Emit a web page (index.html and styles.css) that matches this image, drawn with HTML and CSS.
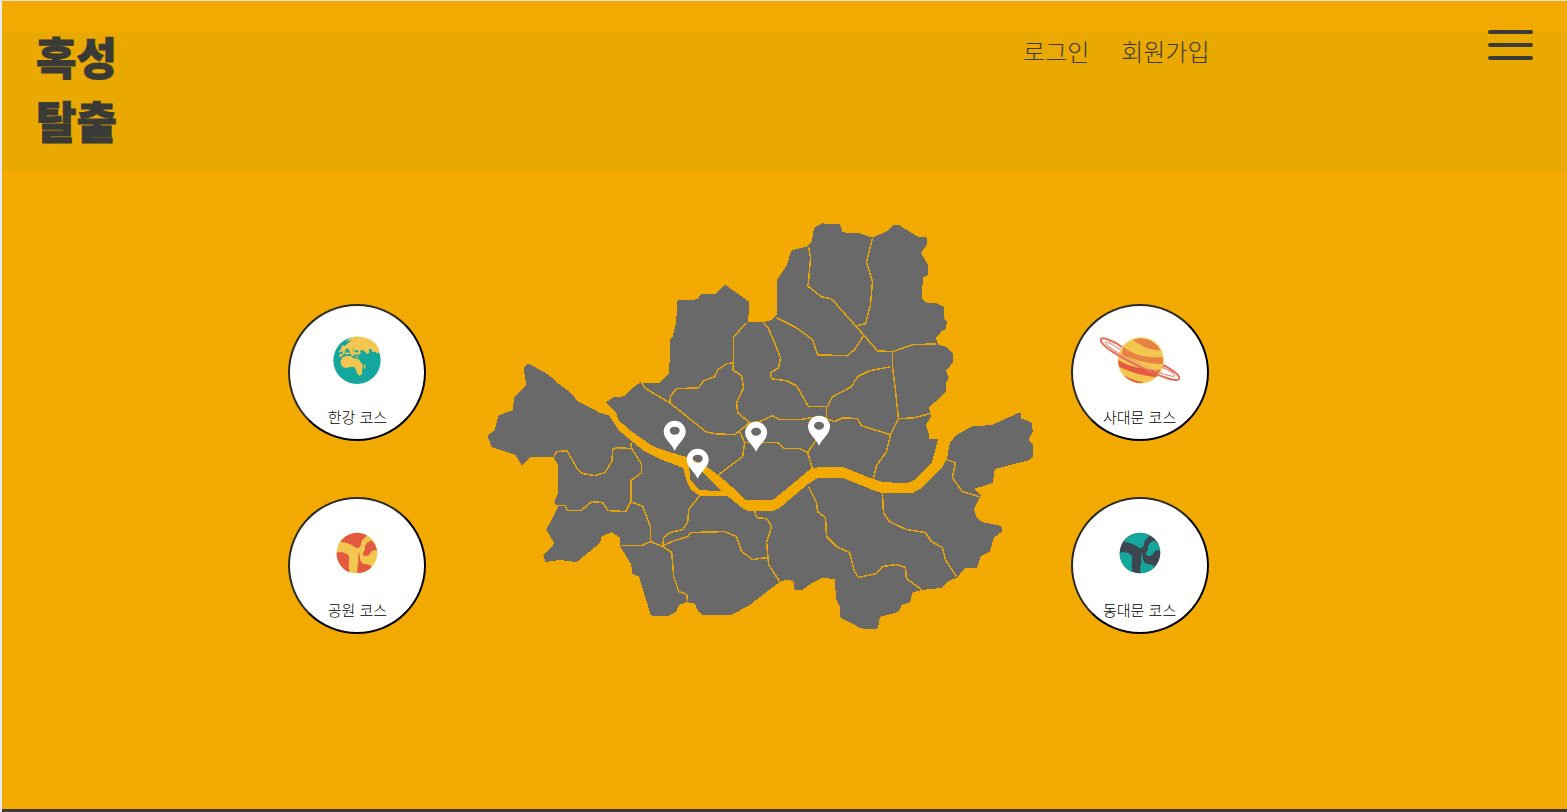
FILE: index.html
```html
<!DOCTYPE html>
<html lang="ko">
<head>
<meta charset="utf-8">
<meta name="viewport" content="width=device-width, initial-scale=1">
<title>혹성탈출</title>
<link rel="stylesheet" href="styles.css">
</head>
<body>
<header class="header">
  <h1 class="logo"><a class="logo-link" href="#"><span>혹성</span><span>탈출</span></a></h1>
  <nav class="nav">
    <a class="nav-link" href="#">로그인</a>
    <a class="nav-link" href="#">회원가입</a>
  </nav>
  <button class="menu" type="button" aria-label="메뉴"><span class="bar"></span><span class="bar"></span><span class="bar"></span></button>
</header>
<main class="main">
  <div class="courses">
    <button class="course" type="button">
      <svg class="planet" viewBox="112 111 240 168" aria-hidden="true">
        <circle cx="232" cy="196" r="71" fill="#14a79d"/>
        <path fill="#f3c74f" d="M218 127C245 122 270 130 288 146L297 160L299 170L292 176L288 170L280 171L273 161L266 165L271 171L262 177L256 170L247 164L241 169L244 175L236 179L240 187L232 188L222 182L213 183L216 178L208 176L200 179L195 175L190 180L184 187L178 184L180 178L189 176L190 169L184 171L179 173L178 168L183 165L186 154L190 150L194 154L203 146L212 139L217 134L208 137L200 140L207 132Z"/>
        <path fill="#f3c74f" d="M189 187L202 182L214 184L221 190L233 191L240 196L245 205L250 208L248 220L247 238L239 242L232 234L228 222L223 215L211 216L200 219L188 215L183 206L183 197ZM253 209L258 211L256 221L252 220Z"/>
        <path fill="#14a79d" d="M194 169L201 160L207 163L209 169L214 171L209 174L202 171ZM222 169L230 165L238 169L232 173ZM222 178L236 181L243 188L236 186L224 182ZM246 168L250 169L249 177L245 173Z"/>
        <path fill="none" stroke="#14a79d" stroke-width="2" d="M230 177L241 189L243 195M195 174L207 169M217 166L225 160"/>
      </svg>
      <span class="course-name">한강 코스</span>
    </button>
    <button class="course" type="button">
      <svg class="planet" viewBox="112 105 240 168" aria-hidden="true">
        <circle cx="232" cy="189" r="61" fill="#f3c74f"/>
        <path fill="#e35a41" d="M182 156A61 61 0 0 1 262 136C257 143 246 149 245 158C244 168 239 174 233 175C222 170 211 157 182 156ZM277 152A61 61 0 0 1 293 182C279 178 275 184 271 192C264 201 251 199 249 192C249 186 256 183 256 176C255 160 266 153 277 152ZM171 188C186 184 206 189 208 200C210 208 207 220 207 228C207 236 211 242 209 247A61 61 0 0 1 171 188ZM238 187C241 198 240 213 247 219C253 225 267 219 276 231A61 61 0 0 1 234 250C230 235 237 223 236 211C235 201 236 194 238 187Z"/>
      </svg>
      <span class="course-name">공원 코스</span>
    </button>
  </div>
  <svg class="map" viewBox="426 171 645 596" role="img" aria-label="서울 지도">
    <path class="land" d="M528 364L524 368L527 386L515 397L513 411L499 416L495 431L488 436L492 447L516 455L522 465L531 457L554 457L559 466L559 492L555 503L559 507L547 530L555 544L544 556L546 562L560 560L577 562L600 543L601 537L612 532L621 538L621 547L632 565L633 574L640 577L652 616L668 616L676 612L679 605L687 602L696 604L698 611L703 615L732 615L750 605L780 582L786 580L792 580L795 583V590H803L812 583L822 578L836 579L837 600L841 608V618L858 627L865 629H878L880 617L899 612L902 605L911 602L912 593L922 590L942 588L949 581L957 578L966 568H977L981 556L990 552L994 538L1002 532V527L983 523L977 518L974 510L981 496L974 489L993 483L995 469L1030 460L1033 457V445L1029 440L1033 432L1032 423L1021 419V413L992 426L973 427L957 436L950 444L947 459L939 440H929V434L926 425L931 417L929 408L946 392V383L949 378L946 371L953 363V354L948 348L938 345L936 338L942 331L946 329L947 322L944 318V307L937 304L926 303L922 298L923 277L928 275V265L921 253L927 245V238L918 237L900 226H894L887 232L873 238L860 234L843 233L840 225L823 224L816 227L814 232L813 242L808 247L792 251L788 265L778 280V315L771 321L764 323H748L749 302L725 285L715 295H701L698 300L678 301L677 323L673 338L671 339L670 373L660 384H643L641 383L635 387L625 397L614 398L606 403L598 412L578 402L570 393L557 383L548 375Z"/>
    <path class="water" d="M601 400L606 403L616 413L618 420L630 431L653 447L667 452L687 458L708 468L720 477L737 492L746 501H773L783 493L812 469L820 468H843L863 476L883 483L907 484L915 481L933 463L939 440L950 438V444L947 459L942 468L922 488L913 493H883L870 489L843 478H818L807 485L780 508L773 511H748L740 506L728 496H700L691 489L687 480L684 468L663 460L643 450L620 431L609 415L598 412Z"/>
    <path class="land" d="M690 467L691 480L700 490L721 491L707 477L697 468Z"/>
    <path class="border" d="M554 457L557 452L567 451L578 470L583 474L595 476L605 473L612 462L613 450L617 448L632 449M631 443L632 449L642 465V473L631 481V502L626 512L608 511L603 503L592 502L581 511H568L565 506H556M631 502L643 507L651 528V542L642 546H621M651 542L663 547L672 553L674 577L679 592L687 595L688 602M663 546L664 538L670 533L683 530L688 523L689 510L700 496M663 546L675 541L688 537L691 533L725 532L737 537L742 552L753 560L768 558M755 511L757 518L767 519L772 527L767 543L769 565L780 582M809 487L817 503L818 512L826 518L827 537L837 547L850 553L855 572L859 578L877 574L883 567L897 565L906 568L907 579L922 590M883 493L884 513L890 522L907 530L926 533L932 542L943 548L946 560L957 577M947 460L956 463L953 478L963 492L980 497M874 479L877 466L887 452L891 435L899 419L896 390L893 367V352M899 419L915 418L930 414M891 435L862 426L858 419L843 418L835 422L827 419V407H809L797 386L787 381L772 379L771 373L779 368L781 358L773 338L768 327L764 323M828 407L833 397L852 387L858 377L870 371L891 367M809 247L811 258L809 282L808 286L822 297L832 299L864 335L878 351L893 352L913 345L937 344M873 238L867 262L873 282L871 305L866 324L857 326M864 336L855 350L848 356L818 355L813 340L797 328L777 318M747 323L734 337V363L733 370L742 376L744 388L737 403L738 413L750 423L760 422L773 416L780 420H800L812 418H827M734 363L727 364L718 370L715 377L704 381L699 388L677 389L671 396L670 403M642 383L646 389L670 403L706 432L715 434L735 435L750 423M740 432L745 443L743 457L727 469L718 476M745 443H778L785 449H800L808 453L813 469M808 453L817 440"/>
    <path class="pin" d="M675 451C672 444 664 439 664 432A11 11 0 0 1 686 432C686 439 678 444 675 451ZM670 431A5 4 0 0 0 680 431A5 4 0 0 0 670 431Z"/>
    <path class="pin" d="M698 479C695 472 687 467 687 460A11 11 0 0 1 709 460C709 467 701 472 698 479ZM693 459A5 4 0 0 0 703 459A5 4 0 0 0 693 459Z"/>
    <path class="pin" d="M756.500 452C753.500 445 745.500 440 745.500 433A11 11 0 0 1 767.500 433C767.500 440 759.500 445 756.500 452ZM751.500 432A5 4 0 0 0 761.500 432A5 4 0 0 0 751.500 432Z"/>
    <path class="pin" d="M819.500 446C816.500 439 808.500 434 808.500 427A11 11 0 0 1 830.500 427C830.500 434 822.500 439 819.500 446ZM814.500 426A5 4 0 0 0 824.500 426A5 4 0 0 0 814.500 426Z"/>
  </svg>
  <div class="courses">
    <button class="course" type="button">
      <svg class="planet" viewBox="120 111 240 168" aria-hidden="true">
        <clipPath id="saturn"><circle cx="242" cy="197" r="67"/></clipPath>
        <circle cx="243" cy="196" r="70" fill="#f8df91"/>
        <circle cx="242" cy="197" r="67" fill="#f3c74f"/>
        <g clip-path="url(#saturn)">
          <path fill="#e98145" d="M218 133C232 149 270 168 310 167V120H215ZM190 155C213 176 255 191 312 186V207C260 209 218 188 184 182Z"/>
          <path fill="#e35a41" d="M170 191C197 212 246 224 302 225L288 247C242 242 207 229 170 213ZM170 228C195 246 222 256 250 262L240 275H190Z"/>
        </g>
        <g fill="none" stroke="#e76c57">
          <path stroke-width="6" d="M186 156C158 136 123 123 122 134C121 151 176 184 246 218C300 245 352 262 358 252C361 243 341 227 309 210"/>
          <path stroke-width="3" d="M181 164C157 148 138 137 136 142C140 156 189 183 248 210C301 236 339 247 344 243C345 238 331 227 306 217"/>
          <path stroke="#f8df91" stroke-width="2" d="M178 175C200 190 250 214 300 232"/>
        </g>
      </svg>
      <span class="course-name">사대문 코스</span>
    </button>
    <button class="course" type="button">
      <svg class="planet" viewBox="112 105 240 168" aria-hidden="true">
        <circle cx="232" cy="189" r="61" fill="#3e4651"/>
        <path fill="#14a79d" d="M182 156A61 61 0 0 1 262 136C257 143 246 149 245 158C244 168 239 174 233 175C222 170 211 157 182 156ZM277 152A61 61 0 0 1 293 182C279 178 275 184 271 192C264 201 251 199 249 192C249 186 256 183 256 176C255 160 266 153 277 152ZM171 188C186 184 206 189 208 200C210 208 207 220 207 228C207 236 211 242 209 247A61 61 0 0 1 171 188ZM238 187C241 198 240 213 247 219C253 225 267 219 276 231A61 61 0 0 1 234 250C230 235 237 223 236 211C235 201 236 194 238 187Z"/>
      </svg>
      <span class="course-name">동대문 코스</span>
    </button>
  </div>
</main>
<footer class="footer"></footer>
</body>
</html>
```
FILE: styles.css
```css
* {
  box-sizing: border-box;
}

body {
  display: flex;
  flex-direction: column;
  min-height: 100vh;
  margin: 0;
  border-top: 1px solid #dfe1e5;
  border-left: 2px solid #e8eaed;
  background: #f3aa00;
  color: #3a3a37;
  font-family: "Noto Sans CJK KR", sans-serif;
}

.header {
  display: flex;
  align-items: flex-start;
  padding: 29px 34px 27px;
  background: linear-gradient(#f3aa00 31px, #eaa900 31px);
}

.logo {
  margin: 2px 0 0;
  font-size: 44px;
  font-weight: 900;
  line-height: 48px;
  -webkit-text-stroke: 1px #3a3a37;
}

.logo-link {
  display: flex;
  flex-direction: column;
  gap: 16px;
  color: inherit;
  text-decoration: none;
}

.nav {
  display: flex;
  gap: 32px;
  margin: 3px 18.6% 0 auto;
}

.nav-link {
  color: inherit;
  font-size: 24px;
  font-weight: 300;
  line-height: 36px;
  text-decoration: none;
}

.menu {
  display: flex;
  flex-direction: column;
  gap: 9px;
  width: 45px;
  padding: 0;
  border: 0;
  background: none;
  cursor: pointer;
}

.bar {
  width: 100%;
  height: 4px;
  border-radius: 2px;
  background: #3a3a37;
}

.main {
  display: flex;
  flex: 1;
  align-items: flex-start;
  padding: 0 22.9% 0 18.3%;
}

.courses {
  display: flex;
  flex: none;
  flex-direction: column;
  gap: 56px;
  padding-top: 133px;
}

.course {
  display: flex;
  flex-direction: column;
  align-items: center;
  gap: 19px;
  width: 138px;
  height: 137px;
  padding: 26px 0 0;
  border: 2px solid;
  border-color: #2a2a2a #000 #000 #2a2a2a;
  border-radius: 50%;
  background: #fff;
  color: #000;
  font-family: inherit;
  cursor: pointer;
}

.planet {
  width: 80px;
  height: 56px;
}

.course-name {
  font-size: 15px;
  font-weight: 300;
  line-height: 20px;
}

.map {
  flex: 1;
  min-width: 0;
}

.land {
  fill: #696969;
  stroke: #696969;
  stroke-width: 1;
  shape-rendering: crispEdges;
}

.water {
  fill: #f3aa00;
  stroke: #f3aa00;
  stroke-width: 1;
  shape-rendering: crispEdges;
}

.border {
  fill: none;
  stroke: #e5a30a;
  stroke-width: 1.5;
  shape-rendering: crispEdges;
}

.pin {
  fill: #fff;
  fill-rule: evenodd;
}

.footer {
  height: 3px;
  background: #3a3a37;
}
```
